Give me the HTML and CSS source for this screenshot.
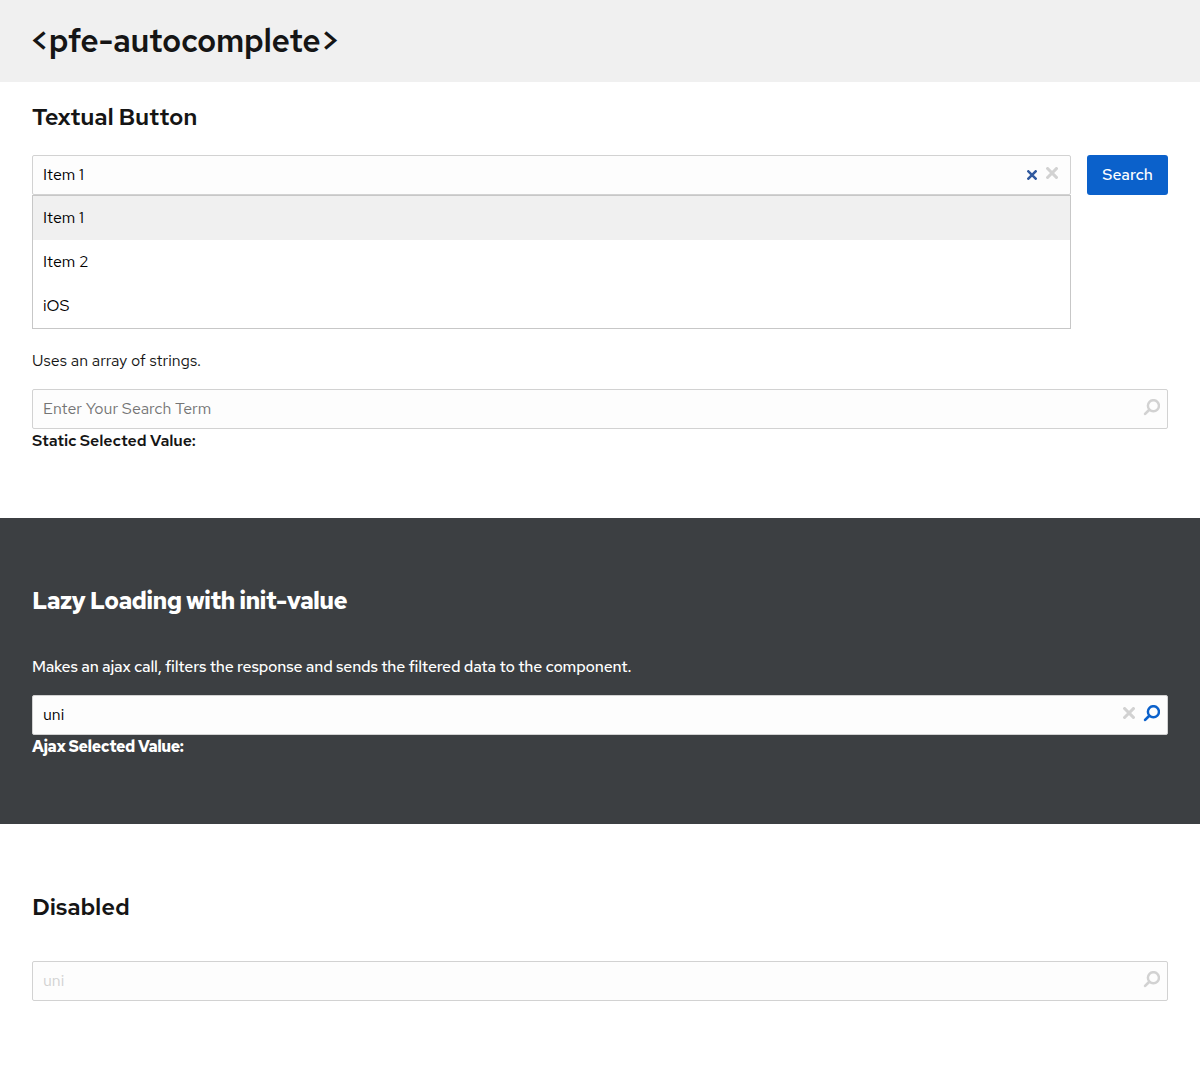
FILE: index.html
```
<!DOCTYPE html>
<html lang="en">
<head>
<meta charset="utf-8">
<title>pfe-autocomplete</title>
<link rel="stylesheet" href="styles.css">
</head>
<body>
<svg class="sprite" aria-hidden="true">
  <symbol id="search" viewBox="0 0 16 16"><circle cx="9.8" cy="6.3" r="5.2" fill="none" stroke="currentColor" stroke-width="2.3"/><path d="M5.7 10.4L2 14" fill="none" stroke="currentColor" stroke-width="2.6" stroke-linecap="round"/></symbol>
  <symbol id="close" viewBox="0 0 12 12"><path d="M1.6 1.6L10.4 10.4M10.4 1.6L1.6 10.4" fill="none" stroke="currentColor" stroke-width="3" stroke-linecap="square"/></symbol>
</svg>
<header class="page-header"><h1>&lt;pfe-autocomplete&gt;</h1></header>
<main>
  <section class="band band-first">
    <h2>Textual Button</h2>
    <div class="search-row">
      <div class="autocomplete">
        <div class="field">
          <span class="value">Item 1</span>
          <svg class="native-clear"><use href="#close"/></svg>
          <svg class="clear"><use href="#close"/></svg>
        </div>
        <ul class="options">
          <li class="active">Item 1</li>
          <li>Item 2</li>
          <li>iOS</li>
        </ul>
      </div>
      <button class="search-button" type="button">Search</button>
    </div>
    <p class="hint">Uses an array of strings.</p>
    <div class="field">
      <span class="value placeholder">Enter Your Search Term</span>
      <svg class="search"><use href="#search"/></svg>
    </div>
    <div class="selected">Static Selected Value:</div>
  </section>
  <section class="band band-dark">
    <h2>Lazy Loading with init-value</h2>
    <p class="description">Makes an ajax call, filters the response and sends the filtered data to the component.</p>
    <div class="field">
      <span class="value">uni</span>
      <svg class="clear"><use href="#close"/></svg>
      <svg class="search enabled"><use href="#search"/></svg>
    </div>
    <div class="selected">Ajax Selected Value:</div>
  </section>
  <section class="band">
    <h2>Disabled</h2>
    <div class="field disabled">
      <span class="value">uni</span>
      <svg class="search"><use href="#search"/></svg>
    </div>
  </section>
</main>
</body>
</html>
```
FILE: styles.css
```
* { box-sizing: border-box; }
body {
  margin: 0;
  background: #fff;
  color: #151515;
  font: 400 16px/24px "Red Hat Text", Inter, "Liberation Sans", sans-serif;
}
.sprite { display: none; }
h1, h2, p, ul { margin: 0; padding: 0; }
.page-header { height: 82px; padding: 17px 32px 0 30px; background: #f0f0f0; }
h1 { font-size: 32px; line-height: 48px; font-weight: 600; letter-spacing: -0.33px; }
h2 { font-size: 24px; line-height: 36px; font-weight: 600; letter-spacing: -0.22px; }
.band { padding: 65px 32px 64px; }
.band-first { height: 436px; padding-top: 17px; }
.band-dark { height: 306px; background: #3c3f42; color: #fff; }
.band-dark h2 { font-weight: 700; letter-spacing: -0.69px; }
.band h2 { margin-bottom: 36px; }
.band-first h2 { margin-bottom: 20px; }
.search-row { display: flex; align-items: flex-start; gap: 16px; }
.autocomplete { flex: 1; }
.field {
  display: flex;
  align-items: center;
  height: 40px;
  padding: 0 6px 0 10px;
  border: 1px solid #d2d2d2;
  border-radius: 2px;
  background: #fdfdfd;
  color: #000;
}
.value { flex: 1; }
.placeholder { color: #757575; }
.disabled .value { color: #d2d2d2; }
.clear { width: 12px; height: 12px; margin: -4px 8px 0 0; color: #d2d2d2; }
.native-clear { width: 10px; height: 10px; color: #315a9f; }
.autocomplete .clear { margin: -4px 6px 0 9px; }
.search { width: 17px; height: 17px; margin: -4px 1px 0 0; color: #d2d2d2; }
.search.enabled { color: #0b61cb; }
.options { list-style: none; border: 1px solid #c7c7c7; background: #fff; color: #000; }
.options li { height: 44px; padding: 10px; }
.options .active { background: #f0f0f0; }
.search-button {
  width: 81px;
  height: 40px;
  padding: 0;
  border: 0;
  border-radius: 3px;
  background: #0b61cb;
  color: #fff;
  font: inherit;
  font-weight: 500;
}
.hint { margin: 20px 0 16px; }
.description { margin-bottom: 16px; font-weight: 500; letter-spacing: -0.195px; }
.selected { font-weight: 600; letter-spacing: -0.1px; }
.band-dark .selected { font-weight: 700; letter-spacing: -0.45px; }
```
